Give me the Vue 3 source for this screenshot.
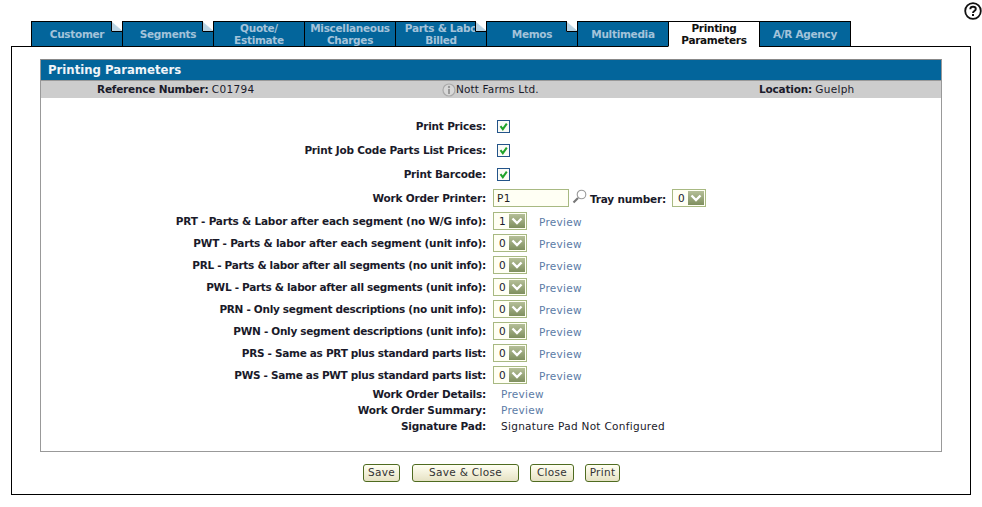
<script setup>
const tabs = [
  { id: 1, lines: ['Customer'], fold: true },
  { id: 2, lines: ['Segments'], fold: true },
  { id: 3, lines: ['Quote/', 'Estimate'] },
  { id: 4, lines: ['Miscellaneous', 'Charges'] },
  { id: 5, lines: ['Parts & Labo', 'Billed'], fold: true },
  { id: 6, lines: ['Memos'], fold: true },
  { id: 7, lines: ['Multimedia'] },
  { id: 8, lines: ['Printing', 'Parameters'], active: true },
  { id: 9, lines: ['A/R Agency'] }
]
const checks = ['Print Prices:', 'Print Job Code Parts List Prices:', 'Print Barcode:']
const reports = [
  { label: 'PRT - Parts & Labor after each segment (no W/G info):', value: '1', wide: true },
  { label: 'PWT - Parts & labor after each segment (unit info):', value: '0', wide: true },
  { label: 'PRL - Parts & labor after all segments (no unit info):', value: '0' },
  { label: 'PWL - Parts & labor after all segments (unit info):', value: '0' },
  { label: 'PRN - Only segment descriptions (no unit info):', value: '0' },
  { label: 'PWN - Only segment descriptions (unit info):', value: '0' },
  { label: 'PRS - Same as PRT plus standard parts list:', value: '0' },
  { label: 'PWS - Same as PWT plus standard parts list:', value: '0' }
]
</script>

<template>
  <div class="page">
    <div class="help-bar">
      <svg class="help" width="18" height="18" viewBox="0 0 18 18" aria-label="Help">
        <circle cx="9" cy="9" r="7.8" fill="#fff" stroke="#111" stroke-width="1.8" />
        <path d="M6.3 7.2C6.3 5.6 7.5 4.8 9 4.8s2.8.8 2.8 2.3c0 2-2.8 2-2.8 4" fill="none" stroke="#111" stroke-width="1.9" />
        <rect x="8" y="12" width="2" height="2" fill="#111" />
      </svg>
    </div>
    <div class="tabs">
      <div v-for="t in tabs" :key="t.id" class="tab" :class="{ active: t.active }">
        <span v-for="l in t.lines" :key="l" class="tab-line">{{ l }}</span>
        <svg v-if="t.fold" class="fold" width="11" height="11" viewBox="0 0 11 11">
          <path d="M0 0H1L11 10V11H0Z" fill="#b9d3e3" />
          <path d="M0 0H11V10Z" fill="#fff" />
          <path d="M.5 0V10.5H11" fill="none" stroke="#000" />
        </svg>
      </div>
    </div>
    <div class="panel">
      <div class="box">
        <div class="box-title">Printing Parameters</div>
        <div class="info">
          <div class="info-ref"><b>Reference Number:</b> <span class="info-v">C01794</span></div>
          <div class="info-name">
            <svg width="14" height="14" viewBox="0 0 14 14">
              <circle cx="7" cy="7" r="6" fill="#d8d8d8" stroke="#aaa" stroke-width="1.2" />
              <circle cx="7" cy="4" r="1.2" fill="#999" />
              <rect x="6" y="6" width="2" height="5" fill="#999" />
            </svg>
            <span class="info-n">Nott Farms Ltd.</span>
          </div>
          <div><b>Location:</b> <span class="info-v">Guelph</span></div>
        </div>
        <div class="form">
          <div v-for="c in checks" :key="c" class="row row-check">
            <label class="lbl">{{ c }}</label>
            <span class="val">
              <span class="check">
                <svg width="11" height="11" viewBox="0 0 11 11"><path d="M2.5 5.2 4.8 8.2 8.8 2.6" fill="none" stroke="#1fa32a" stroke-width="2" /></svg>
              </span>
            </span>
          </div>
          <div class="row row-printer">
            <label class="lbl">Work Order Printer:</label>
            <span class="val">
              <input class="text-input" value="P1" />
              <svg class="lens" width="15" height="16" viewBox="0 0 15 16">
                <circle cx="9.5" cy="5.5" r="4.3" fill="#fff" stroke="#999" stroke-width="1.1" />
                <path d="M6 9 1.5 13.5" stroke="#777" stroke-width="2.2" />
              </svg>
              <b class="tray">Tray number:</b>
              <span class="sel">
                <span class="sel-v">0</span>
                <span class="sel-b"><svg width="12" height="8" viewBox="0 0 12 8"><path d="M1.5 1.5 6 6l4.5-4.5" fill="none" stroke="#fff" stroke-width="2.4" /></svg></span>
              </span>
            </span>
          </div>
          <div v-for="r in reports" :key="r.label" class="row row-report">
            <label class="lbl lbl-tight" :class="{ 'lbl-wide': r.wide }">{{ r.label }}</label>
            <span class="val">
              <span class="sel">
                <span class="sel-v">{{ r.value }}</span>
                <span class="sel-b"><svg width="12" height="8" viewBox="0 0 12 8"><path d="M1.5 1.5 6 6l4.5-4.5" fill="none" stroke="#fff" stroke-width="2.4" /></svg></span>
              </span>
              <a class="link link-report">Preview</a>
            </span>
          </div>
          <div class="row row-plain">
            <label class="lbl">Work Order Details:</label>
            <span class="val val-text"><a class="link">Preview</a></span>
          </div>
          <div class="row row-plain">
            <label class="lbl">Work Order Summary:</label>
            <span class="val val-text"><a class="link">Preview</a></span>
          </div>
          <div class="row row-plain">
            <label class="lbl">Signature Pad:</label>
            <span class="val val-text">Signature Pad Not Configured</span>
          </div>
        </div>
      </div>
      <div class="actions">
        <button class="btn btn-save">Save</button>
        <button class="btn btn-sc">Save &amp; Close</button>
        <button class="btn btn-close">Close</button>
        <button class="btn btn-print">Print</button>
      </div>
    </div>
  </div>
</template>

<style>
html, body { margin: 0; background: #fff; }
</style>

<style scoped>
.page {
  width: 982px;
  height: 507px;
  font-family: "DejaVu Sans", Verdana, sans-serif;
  font-size: 10.5px;
  color: #1a1a2a;
  overflow: hidden;
}
.help-bar { height: 21px; display: flex; justify-content: flex-end; padding: 2px 0 0; box-sizing: border-box; }
.help { display: block; }
.tabs { display: flex; padding-left: 31px; height: 26px; position: relative; z-index: 1; }
.tab {
  position: relative;
  width: 91px;
  height: 26px;
  box-sizing: border-box;
  background: #03659b;
  color: #a3c3da;
  border: 1px solid #000;
  border-right-width: 0;
  font-weight: 700;
  font-size: 10.5px;
  letter-spacing: -0.3px;
  line-height: 12px;
  text-align: center;
  display: flex;
  flex-direction: column;
  justify-content: center;
}
.tab:last-child { border-right-width: 1px; width: 92px; }
.tab.active { background: #fff; color: #111; border-bottom-color: #fff; }
.tab-line { display: block; white-space: nowrap; }
.fold { position: absolute; top: -1px; right: 0; }
.panel {
  width: 960px;
  height: 449px;
  margin: -1px 0 0 11px;
  box-sizing: border-box;
  border: 1px solid #000;
  padding: 12px 28px 0;
}
.box {
  width: 902px;
  height: 393px;
  box-sizing: border-box;
  border: 1px solid #999;
  border-top-color: #888;
}
.box-title {
  height: 20px;
  background: #03659b;
  color: #f0f4f8;
  font-weight: 700;
  font-size: 11.7px;
  line-height: 21px;
  padding-left: 7px;
  border-bottom: 1px solid #999;
}
.info {
  height: 17px;
  background: #cdcdcd;
  display: grid;
  grid-template-columns: 401px 317px 1fr;
  line-height: 17px;
}
.info b { letter-spacing: -0.2px; }
.info-v { letter-spacing: 0.3px; }
.info-n { letter-spacing: 0.15px; }
.info-ref { padding-left: 56px; }
.info-name { display: flex; align-items: center; }
.form { padding-top: 16px; }
.row { display: flex; align-items: center; }
.row-check { height: 24px; }
.row-printer { height: 24px; }
.row-report { height: 22px; }
.row-plain { height: 16px; }
.lbl {
  width: 445px;
  flex: none;
  text-align: right;
  font-weight: 700;
  letter-spacing: -0.2px;
  white-space: nowrap;
}
.lbl-tight { letter-spacing: -0.3px; }
.lbl-wide { letter-spacing: -0.2px; }
.val { display: flex; align-items: center; margin-left: 7px; }
.val-text { margin-left: 15px; letter-spacing: 0.3px; }
.row-check .val { margin-left: 11px; }
.check {
  width: 13px;
  height: 13px;
  box-sizing: border-box;
  border: 1px solid #23548a;
  background: #fbfbf6;
  display: flex;
  align-items: center;
  justify-content: center;
}
.text-input {
  width: 76px;
  height: 18px;
  box-sizing: border-box;
  border: 1px solid #a8b982;
  background: #fffff4;
  padding: 0 0 0 3px;
  font: inherit;
  letter-spacing: 0.3px;
  color: #222;
  outline: none;
}
.lens { margin: -3px 0 0 3px; }
.tray { margin: 2px 6px 0 3px; letter-spacing: -0.2px; }
.sel {
  width: 34px;
  height: 18px;
  box-sizing: border-box;
  border: 1px solid #a8b982;
  background: #fffff4;
  display: flex;
  align-items: center;
  justify-content: space-between;
  padding: 0 1px 0 5px;
}
.sel-b {
  width: 16px;
  height: 14px;
  background: linear-gradient(#b5bf98, #7f8f5f);
  display: flex;
  align-items: center;
  justify-content: center;
}
.link { color: #5b7ba6; letter-spacing: 0.3px; }
.link-report { margin: 1px 0 0 12px; }
.actions {
  display: flex;
  margin-top: 12px;
  padding-left: 323px;
}
.btn {
  height: 18px;
  box-sizing: border-box;
  border: 1px solid #4f6b20;
  border-radius: 3px;
  background: linear-gradient(#fffff2, #e6e2c4);
  font: inherit;
  letter-spacing: 0.3px;
  color: #333;
  padding: 0 0 2px;
}
.btn-save { width: 37px; margin-right: 12px; }
.btn-sc { width: 107px; margin-right: 11px; }
.btn-close { width: 44px; margin-right: 11px; }
.btn-print { width: 35px; }
</style>
